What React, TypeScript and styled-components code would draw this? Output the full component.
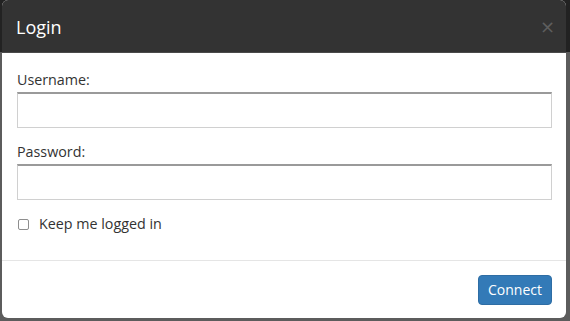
import React from 'react'
import styled, { createGlobalStyle } from 'styled-components'

const GlobalStyle = createGlobalStyle`
  html, body {
    margin: 0;
    padding: 0;
  }
  body {
    font-family: "Open Sans", "Liberation Sans", sans-serif;
    background: linear-gradient(#222 0, #222 52px, #5c5c5c 52px, #5c5c5c 100%);
    width: 570px;
    height: 321px;
    overflow: hidden;
  }
  * {
    box-sizing: border-box;
  }
`

const Backdrop = styled.div`
  height: 321px;
  padding: 0 4px 3px 2px;
  display: flex;
`

const Modal = styled.div`
  flex: 1;
  display: flex;
  flex-direction: column;
  background: #fff;
  border-radius: 6px;
  overflow: hidden;
`

const Header = styled.div`
  height: 53px;
  background: #333;
  border-bottom: 1px solid #4a4a4a;
  display: flex;
  align-items: center;
  justify-content: space-between;
  padding: 2px 11px 0 14px;
`

const Title = styled.h4`
  margin: 0;
  color: #fff;
  font-size: 18px;
  font-weight: 400;
  line-height: 20px;
`

const Close = styled.button`
  border: none;
  background: none;
  padding: 0;
  color: #5e5e5e;
  font-family: "DejaVu Sans", sans-serif;
  font-size: 18px;
  font-weight: 400;
  line-height: 1;
  cursor: pointer;
`

const Body = styled.div`
  flex: 1;
  padding: 17px 14px 0 15px;
  border-bottom: 1px solid #e5e5e5;
`

const Field = styled.div`
  margin-bottom: 14px;
`

const Label = styled.label`
  display: block;
  color: #333;
  font-size: 14.3px;
  line-height: 20px;
  margin-bottom: 2px;
`

const Input = styled.input`
  display: block;
  width: 100%;
  height: 36px;
  border: 1px solid #d0d0d0;
  border-top: 2px solid #9a9a9a;
  border-radius: 0;
  background: #fff;
  font-size: 14px;
  padding: 6px 10px;
  outline: none;
`

const CheckRow = styled.label`
  display: flex;
  align-items: center;
  gap: 10px;
  margin-top: 2px;
  padding-left: 1px;
  color: #333;
  font-size: 14.3px;
  line-height: 20px;
`

const Check = styled.input`
  appearance: none;
  margin: 0;
  width: 11px;
  height: 11px;
  border: 1px solid #8e8e8e;
  border-radius: 2px;
  background: #fff;
`

const Footer = styled.div`
  height: 57px;
  display: flex;
  align-items: center;
  justify-content: flex-end;
  padding: 0 14px 0 0;
`

const Button = styled.button`
  height: 30px;
  padding: 0 9px;
  background: #337ab7;
  border: 1px solid #2e6da4;
  border-radius: 4px;
  color: #fff;
  font-family: "Open Sans", "Liberation Sans", sans-serif;
  font-size: 14px;
  cursor: pointer;
`

export default function App() {
  return (
    <>
      <GlobalStyle />
      <Backdrop>
        <Modal>
          <Header>
            <Title>Login</Title>
            <Close aria-label="Close">×</Close>
          </Header>
          <Body>
            <Field>
              <Label htmlFor="username">Username:</Label>
              <Input id="username" type="text" />
            </Field>
            <Field>
              <Label htmlFor="password">Password:</Label>
              <Input id="password" type="password" />
            </Field>
            <CheckRow>
              <Check type="checkbox" />
              Keep me logged in
            </CheckRow>
          </Body>
          <Footer>
            <Button>Connect</Button>
          </Footer>
        </Modal>
      </Backdrop>
    </>
  )
}
